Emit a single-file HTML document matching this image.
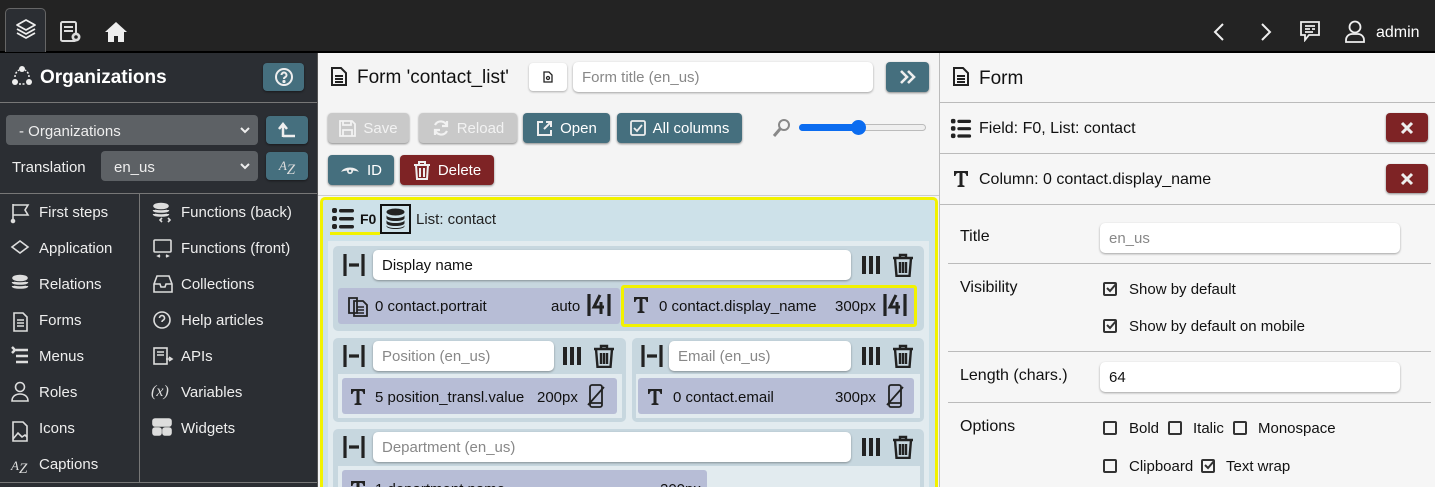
<!DOCTYPE html>
<html style="width:1435px;height:487px;overflow:hidden"><head><meta charset="utf-8">
<style>
*{box-sizing:border-box;margin:0;padding:0}
body{width:1435px;height:487px;overflow:hidden;font-family:"Liberation Sans",sans-serif;font-size:15px;background:#f4f4f4;position:relative;color:#111}
.a{position:absolute}
.t{position:absolute;white-space:nowrap;line-height:1;margin-top:1px}
.btn{position:absolute;border-radius:4px;box-shadow:0 1px 2px rgba(0,0,0,.45);color:#fff;font-size:15px;display:flex;align-items:center;justify-content:center;gap:7px}
.teal{background:#456f7e}
.red{background:#7e2325}
.dis{background:#c9c9c9;color:#f2f2f2}
.inp{position:absolute;background:#fff;border-radius:5px;box-shadow:0 1px 2px rgba(0,0,0,.35);font-size:15px;color:#888;padding-left:9px;display:flex;align-items:center}
.side{color:#eee;font-size:15px}
.grp{position:absolute;background:#c7d7df;border-radius:5px}
.chip{position:absolute;background:#b7bdd6;border-radius:3px;font-size:15px;color:#222;display:flex;align-items:center}
.hl{border:3px solid #f2f200}
.cb{position:absolute;width:14px;height:14px;border:2px solid #333;border-radius:2px}
.ln{position:absolute;height:1px;background:#bbb}
</style></head><body>

<div class="a" style="left:0;top:0;width:1435px;height:51px;background:#232323"></div>
<div class="a" style="left:0;top:51px;width:1435px;height:2px;background:#000"></div>
<div class="a" style="left:5px;top:8px;width:41px;height:44px;border:1px solid #666;border-bottom:none;border-radius:5px 5px 0 0;background:#2b2e33"></div>
<svg class="a" style="left:14px;top:17px" width="24" height="24" viewBox="0 0 24 24" fill="none" stroke="#eee" stroke-width="1.8" stroke-linejoin="round"><path d="M12 3 3 8l9 5 9-5z"/><path d="M3 12l9 5 9-5"/><path d="M3 16l9 5 9-5"/></svg>
<svg class="a" style="left:60px;top:21px" width="22" height="22" viewBox="0 0 22 22" fill="#ddd"><rect x="1" y="1" width="15" height="19" rx="1.5" fill="none" stroke="#ddd" stroke-width="2"/><rect x="4" y="5" width="9" height="2"/><rect x="4" y="9" width="9" height="2"/><circle cx="16" cy="16" r="4.5"/><circle cx="16" cy="16" r="1.8" fill="#232323"/></svg>
<svg class="a" style="left:104px;top:21px" width="24" height="22" viewBox="0 0 24 22" fill="#eee"><path d="M12 1 1 11h3v10h6v-6h4v6h6V11h3z"/></svg>
<svg class="a" style="left:1212px;top:22px" width="14" height="20" viewBox="0 0 14 20" fill="none" stroke="#eee" stroke-width="2"><path d="M11 2 3 10l8 8"/></svg>
<svg class="a" style="left:1259px;top:22px" width="14" height="20" viewBox="0 0 14 20" fill="none" stroke="#eee" stroke-width="2"><path d="M3 2l8 8-8 8"/></svg>
<svg class="a" style="left:1299px;top:20px" width="22" height="22" viewBox="0 0 22 22" fill="none" stroke="#eee" stroke-width="1.8"><path d="M2 2h18v13H10l-4 5v-5H2z"/><path d="M6 6h10M6 9h5M13 9h3M6 12h8"/></svg>
<svg class="a" style="left:1344px;top:20px" width="22" height="23" viewBox="0 0 22 23" fill="none" stroke="#eee" stroke-width="1.8"><circle cx="11" cy="7" r="5.5"/><path d="M2 22v-2a6 6 0 0 1 6-6h6a6 6 0 0 1 6 6v2z"/></svg>
<div class="t" style="left:1376px;top:24px;color:#fff;font-size:16px">admin</div>

<div class="a" style="left:0;top:53px;width:318px;height:434px;background:#2b2e33;border-right:1px solid #555"></div>
<svg class="a" style="left:11px;top:65px" width="22" height="22" viewBox="0 0 22 22" fill="#eee"><circle cx="11" cy="4" r="3"/><circle cx="4" cy="17" r="3"/><circle cx="18" cy="17" r="3"/><path d="M4 12a8 8 0 0 1 4-7M18 12a8 8 0 0 0-4-7M8 19h6" stroke="#eee" stroke-width="1.5" fill="none" stroke-dasharray="2 1.5"/></svg>
<div class="t" style="left:40px;top:67px;color:#fff;font-size:19px;font-weight:bold">Organizations</div>
<div class="btn teal" style="left:263px;top:63px;width:41px;height:28px"><svg width="20" height="20" viewBox="0 0 20 20" fill="none" stroke="#eee" stroke-width="2"><circle cx="10" cy="10" r="8"/><path d="M7.5 8a2.5 2.5 0 1 1 3.5 2.3c-.8.4-1 .9-1 1.7" /><circle cx="10" cy="14.5" r=".6" fill="#eee"/></svg></div>
<div class="a" style="left:0;top:102px;width:317px;height:1px;background:#777"></div>
<div class="a" style="left:6px;top:115px;width:252px;height:30px;background:#5d6165;border-radius:4px"></div>
<div class="t side" style="left:19px;top:123px">- Organizations</div>
<svg class="a" style="left:240px;top:126px" width="10" height="8" viewBox="0 0 10 8" fill="none" stroke="#eee" stroke-width="2"><path d="M1 2l4 4 4-4"/></svg>
<div class="btn teal" style="left:266px;top:116px;width:42px;height:28px"><svg width="18" height="16" viewBox="0 0 18 16" fill="none" stroke="#eee" stroke-width="2.5"><path d="M5 15V3M1 7l4-5 4 5M5 14h12"/></svg></div>
<div class="t side" style="left:12px;top:159px">Translation</div>
<div class="a" style="left:101px;top:151px;width:157px;height:30px;background:#5d6165;border-radius:4px"></div>
<div class="t side" style="left:114px;top:159px">en_us</div>
<svg class="a" style="left:240px;top:162px" width="10" height="8" viewBox="0 0 10 8" fill="none" stroke="#eee" stroke-width="2"><path d="M1 2l4 4 4-4"/></svg>
<div class="btn teal" style="left:266px;top:152px;width:42px;height:28px;font-family:'Liberation Serif',serif;font-style:italic;font-size:13px;color:#ddd;gap:0">A<span style="font-size:15px;position:relative;top:4px">Z</span></div>
<div class="a" style="left:0;top:193px;width:317px;height:1px;background:#777"></div>
<div class="a" style="left:139px;top:194px;width:1px;height:289px;background:#777"></div>
<div class="a" style="left:0;top:482px;width:317px;height:1px;background:#777"></div>

<div class="t side" style="left:39px;top:204px">First steps</div>
<div class="t side" style="left:39px;top:240px">Application</div>
<div class="t side" style="left:39px;top:276px">Relations</div>
<div class="t side" style="left:39px;top:312px">Forms</div>
<div class="t side" style="left:39px;top:348px">Menus</div>
<div class="t side" style="left:39px;top:384px">Roles</div>
<div class="t side" style="left:39px;top:420px">Icons</div>
<div class="t side" style="left:39px;top:456px">Captions</div>
<div class="t side" style="left:181px;top:204px">Functions (back)</div>
<div class="t side" style="left:181px;top:240px">Functions (front)</div>
<div class="t side" style="left:181px;top:276px">Collections</div>
<div class="t side" style="left:181px;top:312px">Help articles</div>
<div class="t side" style="left:181px;top:348px">APIs</div>
<div class="t side" style="left:181px;top:384px">Variables</div>
<div class="t side" style="left:181px;top:420px">Widgets</div>
<svg class="a" style="left:10px;top:202px" width="20" height="280" viewBox="0 0 20 280" fill="none" stroke="#ddd" stroke-width="1.6">
<path d="M3 2v18M3 3h15l-3 5 3 5H3"/><circle cx="3" cy="19" r="1.5" fill="#ddd"/>
<path d="M10 39l8 6-8 6-8-6z"/>
<ellipse cx="10" cy="76" rx="7" ry="2.5" fill="#ddd"/><path d="M3 80c0 2 14 2 14 0M3 84c0 2 14 2 14 0" stroke-width="2.5"/>
<path d="M4 111h9l4 4v14H4z"/><path d="M7 118h7M7 121h7M7 124h7"/>
<path d="M6 148h12M6 154h12M6 160h12M2 145l3 3-3 3" stroke-width="2.5"/>
<circle cx="10" cy="185" r="4.5"/><path d="M2 199c0-5 4-7 8-7s8 2 8 7z"/>
<path d="M3 220h10l4 4v15H3z"/><path d="M3 237l5-6 4 4 3-2 2 2"/>
</svg>
<div class="t" style="left:11px;top:458px;color:#ddd;font-family:'Liberation Serif',serif;font-style:italic;font-size:13px">A<span style="font-size:15px;position:relative;top:3px">Z</span></div>
<svg class="a" style="left:152px;top:202px" width="22" height="240" viewBox="0 0 22 240" fill="none" stroke="#ddd" stroke-width="1.6">
<ellipse cx="9" cy="4" rx="7" ry="2.5" fill="#ddd"/><path d="M2 8c0 2 14 2 14 0M2 12c0 2 14 2 14 0" stroke-width="2.5"/><path d="M10 16l-2 2 2 2M16 16l2 2-2 2"/>
<rect x="2" y="38" width="17" height="12" rx="1"/><path d="M8 53l-2 1 2 1M14 53l2 1-2 1"/>
<path d="M2 82l3-8h12l3 8v8H2zM2 82h6l1 3h4l1-3h6"/>
<circle cx="10" cy="118" r="8"/><path d="M7.5 116a2.5 2.5 0 1 1 3.5 2.3c-.8.4-1 .9-1 1.7"/>
<rect x="2" y="146" width="13" height="16"/><path d="M5 150h7M5 153h7M14 157h6M17 155l3 2-3 2"/>
<rect x="1" y="217" width="18" height="7" rx="2" fill="#ddd"/><rect x="1" y="226" width="8" height="7" rx="2" fill="#ddd"/><rect x="11" y="226" width="8" height="7" rx="2" fill="#ddd"/>
</svg>
<div class="t" style="left:151px;top:383px;color:#ddd;font-family:'Liberation Serif',serif;font-style:italic;font-size:16px">(<i>x</i>)</div>

<svg class="a" style="left:330px;top:66px" width="18" height="21" viewBox="0 0 18 21" fill="none" stroke="#222" stroke-width="2"><path d="M2 2h9l5 5v12H2z"/><path d="M5 10h8M5 13h8M5 16h8"/></svg>
<div class="t" style="left:357px;top:67px;font-size:19px;color:#111">Form 'contact_list'</div>
<div class="btn" style="left:529px;top:63px;width:38px;height:28px;background:#fff;box-shadow:0 1px 2px rgba(0,0,0,.3)"><svg width="10" height="12" viewBox="0 0 10 12" fill="none" stroke="#222" stroke-width="1.3"><path d="M1 1h5l3 3v7H1z"/><circle cx="5" cy="7" r="1.5"/></svg></div>
<div class="inp" style="left:573px;top:62px;width:300px;height:30px">Form title (en_us)</div>
<div class="btn teal" style="left:886px;top:62px;width:43px;height:30px"><svg width="20" height="16" viewBox="0 0 20 16" fill="none" stroke="#eee" stroke-width="2.6"><path d="M3 2l6 6-6 6M10 2l6 6-6 6"/></svg></div>

<div class="btn dis" style="left:328px;top:113px;width:81px;height:30px"><svg width="17" height="17" viewBox="0 0 17 17" fill="none" stroke="#f2f2f2" stroke-width="1.8"><path d="M1 1h12l3 3v12H1z"/><path d="M4 1v4h8V1M4 16v-6h9v6"/></svg>Save</div>
<div class="btn dis" style="left:419px;top:113px;width:98px;height:30px"><svg width="18" height="18" viewBox="0 0 18 18" fill="none" stroke="#f2f2f2" stroke-width="2.2"><path d="M15 7A6.5 6.5 0 0 0 3 6M3 11a6.5 6.5 0 0 0 12 1"/><path d="M15 2v5h-5M3 16v-5h5"/></svg>Reload</div>
<div class="btn teal" style="left:523px;top:113px;width:87px;height:30px"><svg width="17" height="17" viewBox="0 0 17 17" fill="none" stroke="#eee" stroke-width="2"><path d="M7 2H2v13h13v-5"/><path d="M8 9l7-7M10 2h5v5"/></svg>Open</div>
<div class="btn teal" style="left:617px;top:113px;width:125px;height:30px"><svg width="16" height="16" viewBox="0 0 16 16" fill="none" stroke="#eee" stroke-width="1.8"><rect x="1" y="1" width="14" height="14" rx="1.5"/><path d="M4 8l3 3 5-6"/></svg>All columns</div>
<svg class="a" style="left:772px;top:118px" width="20" height="20" viewBox="0 0 20 20" fill="none" stroke="#888" stroke-width="2"><circle cx="12" cy="7" r="5"/><path d="M8 11l-6 7" stroke-width="3"/></svg>
<div class="a" style="left:799px;top:124px;width:127px;height:7px;border-radius:4px;background:#efefef;border:1px solid #bbb"></div>
<div class="a" style="left:799px;top:124px;width:60px;height:7px;border-radius:4px;background:#0b6cf0"></div>
<div class="a" style="left:851px;top:120px;width:15px;height:15px;border-radius:50%;background:#0b6cf0"></div>

<div class="btn teal" style="left:328px;top:155px;width:66px;height:30px"><svg width="20" height="12" viewBox="0 0 20 12"><path d="M1 8C4 2 16 2 19 8c-3-2-15-2-18 0z" fill="#eee"/><circle cx="10" cy="7" r="3" fill="#eee"/><circle cx="10" cy="7" r="1.3" fill="#456f7e"/></svg>ID</div>
<div class="btn red" style="left:400px;top:155px;width:94px;height:30px"><svg width="18" height="19" viewBox="0 0 18 19" fill="none" stroke="#eee" stroke-width="2"><path d="M1 4h16M6 4V1h6v3M3 4l1 14h10l1-14M7 7v9M11 7v9"/></svg>Delete</div>
<div class="a" style="left:318px;top:195px;width:621px;height:1px;background:#ccc"></div>

<div class="a" style="left:320px;top:197px;width:618px;height:310px;background:#cde1e9;border:3px solid #f2f200;border-radius:5px"></div>
<svg class="a" style="left:331px;top:206px" width="24" height="24" viewBox="0 0 24 24" fill="#222"><rect x="1" y="2" width="5" height="5" rx="2"/><rect x="1" y="10" width="5" height="5" rx="2"/><rect x="1" y="18" width="5" height="5" rx="2"/><rect x="8" y="3" width="15" height="3.5" rx="1.7"/><rect x="8" y="11" width="15" height="3.5" rx="1.7"/><rect x="8" y="19" width="15" height="3.5" rx="1.7"/></svg>
<div class="a" style="left:330px;top:232px;width:50px;height:3px;background:#f2f200"></div>
<div class="t" style="left:360px;top:211px;font-size:14px;font-weight:bold">F0</div>
<div class="a" style="left:380px;top:204px;width:31px;height:30px;border:2px solid #111"></div>
<svg class="a" style="left:385px;top:208px" width="21" height="22" viewBox="0 0 21 22" fill="#222"><ellipse cx="10.5" cy="4" rx="9" ry="3.5"/><path d="M1.5 7c0 4 18 4 18 0v3c0 4-18 4-18 0zM1.5 12c0 4 18 4 18 0v3c0 4-18 4-18 0zM1.5 17c0 4 18 4 18 0v1c0 4-18 4-18 0z"/></svg>
<div class="t" style="left:416px;top:211px;font-size:15px;color:#222">List: contact</div>
<div class="a" style="left:328px;top:241px;width:601px;height:260px;background:#e2ebef"></div>

<svg width="0" height="0" style="position:absolute"><defs>
<symbol id="hw" viewBox="0 0 22 26"><path d="M2 2v22M20 2v22M6 13h10" stroke="#222" stroke-width="3.2" fill="none"/></symbol>
<symbol id="cols" viewBox="0 0 22 20"><path d="M3 1v18M10 1v18M17 1v18" stroke="#222" stroke-width="4"/></symbol>
<symbol id="trash" viewBox="0 0 22 24"><path d="M1 5h20M8 5V2h6v3M3 5l1.5 18h13L19 5M8 9v11M11 9v11M14 9v11" stroke="#222" stroke-width="2.4" fill="none"/></symbol>
<symbol id="T" viewBox="0 0 16 18"><path d="M1 1h14v5h-1.5c-.5-2-1-3-3-3H9.5v12l2 .8V17h-7v-1.2l2-.8V3H5.5c-2 0-2.5 1-3 3H1z" fill="#222"/></symbol>
<symbol id="wrap" viewBox="0 0 24 26"><path d="M2 2v22M22 2v22" stroke="#222" stroke-width="3.2"/><path d="M13 3L7 15h10M14 10v12" stroke="#222" stroke-width="3" fill="none"/></symbol>
<symbol id="mob" viewBox="0 0 18 24"><rect x="3" y="1" width="12" height="22" rx="2" stroke="#222" stroke-width="1.8" fill="none"/><path d="M3 19h12M1 21L17 3" stroke="#222" stroke-width="1.8"/></symbol>
<symbol id="copy" viewBox="0 0 22 22"><path d="M2 3h8v15H2zM7 6h9l4 4v11H7z" stroke="#222" stroke-width="1.8" fill="#b7bdd6"/><path d="M10 12h7M10 15h7M10 18h7" stroke="#222" stroke-width="1.5"/></symbol>
</defs></svg>

<div class="grp" style="left:333px;top:246px;width:591px;height:85px"></div>
<svg class="a" style="left:342px;top:252px" width="24" height="26"><use href="#hw"/></svg>
<div class="inp" style="left:373px;top:250px;width:478px;height:30px;color:#111">Display name</div>
<svg class="a" style="left:861px;top:255px" width="22" height="20"><use href="#cols"/></svg>
<svg class="a" style="left:892px;top:253px" width="22" height="24"><use href="#trash"/></svg>
<div class="chip" style="left:338px;top:288px;width:282px;height:36px"></div>
<svg class="a" style="left:347px;top:295px" width="22" height="22"><use href="#copy"/></svg>
<div class="t" style="left:375px;top:298px">0 contact.portrait</div>
<div class="t" style="left:551px;top:298px">auto</div>
<svg class="a" style="left:587px;top:292px" width="24" height="26"><use href="#wrap"/></svg>
<div class="chip hl" style="left:621px;top:285px;width:296px;height:42px"></div>
<svg class="a" style="left:633px;top:296px" width="16" height="18"><use href="#T"/></svg>
<div class="t" style="left:659px;top:298px">0 contact.display_name</div>
<div class="t" style="left:835px;top:298px">300px</div>
<svg class="a" style="left:883px;top:292px" width="24" height="26"><use href="#wrap"/></svg>

<div class="grp" style="left:333px;top:338px;width:293px;height:84px"></div>
<svg class="a" style="left:342px;top:343px" width="24" height="26"><use href="#hw"/></svg>
<div class="inp" style="left:373px;top:341px;width:181px;height:30px">Position (en_us)</div>
<svg class="a" style="left:562px;top:346px" width="22" height="20"><use href="#cols"/></svg>
<svg class="a" style="left:593px;top:344px" width="22" height="24"><use href="#trash"/></svg>
<div class="a" style="left:338px;top:374px;width:284px;height:44px;background:#e2ebef"></div>
<div class="chip" style="left:342px;top:378px;width:275px;height:36px"></div>
<svg class="a" style="left:350px;top:388px" width="16" height="18"><use href="#T"/></svg>
<div class="t" style="left:375px;top:389px">5 position_transl.value</div>
<div class="t" style="left:537px;top:389px">200px</div>
<svg class="a" style="left:587px;top:384px" width="18" height="24"><use href="#mob"/></svg>

<div class="grp" style="left:632px;top:338px;width:292px;height:84px"></div>
<svg class="a" style="left:640px;top:343px" width="24" height="26"><use href="#hw"/></svg>
<div class="inp" style="left:669px;top:341px;width:182px;height:30px">Email (en_us)</div>
<svg class="a" style="left:861px;top:346px" width="22" height="20"><use href="#cols"/></svg>
<svg class="a" style="left:892px;top:344px" width="22" height="24"><use href="#trash"/></svg>
<div class="a" style="left:636px;top:374px;width:284px;height:44px;background:#e2ebef"></div>
<div class="chip" style="left:638px;top:378px;width:276px;height:36px"></div>
<svg class="a" style="left:647px;top:388px" width="16" height="18"><use href="#T"/></svg>
<div class="t" style="left:673px;top:389px">0 contact.email</div>
<div class="t" style="left:835px;top:389px">300px</div>
<svg class="a" style="left:886px;top:384px" width="18" height="24"><use href="#mob"/></svg>

<div class="grp" style="left:333px;top:429px;width:591px;height:70px"></div>
<svg class="a" style="left:342px;top:434px" width="24" height="26"><use href="#hw"/></svg>
<div class="inp" style="left:373px;top:432px;width:478px;height:30px">Department (en_us)</div>
<svg class="a" style="left:861px;top:437px" width="22" height="20"><use href="#cols"/></svg>
<svg class="a" style="left:892px;top:435px" width="22" height="24"><use href="#trash"/></svg>
<div class="a" style="left:338px;top:466px;width:582px;height:30px;background:#e2ebef"></div>
<div class="chip" style="left:342px;top:470px;width:365px;height:30px"></div>
<svg class="a" style="left:350px;top:480px" width="16" height="18"><use href="#T"/></svg>
<div class="t" style="left:375px;top:481px">1 department.name</div>
<div class="t" style="left:660px;top:481px">200px</div>

<div class="a" style="left:939px;top:53px;width:496px;height:434px;background:#f6f6f6;border-left:1px solid #bbb"></div>
<svg class="a" style="left:952px;top:66px" width="18" height="21" viewBox="0 0 18 21" fill="none" stroke="#222" stroke-width="2"><path d="M2 2h9l5 5v12H2z"/><path d="M5 10h8M5 13h8M5 16h8"/></svg>
<div class="t" style="left:979px;top:68px;font-size:19px">Form</div>
<div class="ln" style="left:940px;top:102px;width:495px"></div>
<svg class="a" style="left:950px;top:117px" width="22" height="22" viewBox="0 0 24 24" fill="#222"><rect x="1" y="2" width="5" height="5" rx="2"/><rect x="1" y="10" width="5" height="5" rx="2"/><rect x="1" y="18" width="5" height="5" rx="2"/><rect x="8" y="3" width="15" height="3.5" rx="1.7"/><rect x="8" y="11" width="15" height="3.5" rx="1.7"/><rect x="8" y="19" width="15" height="3.5" rx="1.7"/></svg>
<div class="t" style="left:979px;top:120px;font-size:16px">Field: F0, List: contact</div>
<div class="btn red" style="left:1386px;top:113px;width:42px;height:29px"><svg width="14" height="14" viewBox="0 0 14 14" stroke="#eee" stroke-width="3"><path d="M2 2l10 10M12 2L2 12"/></svg></div>
<div class="ln" style="left:940px;top:153px;width:495px"></div>
<svg class="a" style="left:953px;top:170px" width="16" height="18"><use href="#T"/></svg>
<div class="t" style="left:979px;top:171px;font-size:16px">Column: 0 contact.display_name</div>
<div class="btn red" style="left:1386px;top:164px;width:42px;height:29px"><svg width="14" height="14" viewBox="0 0 14 14" stroke="#eee" stroke-width="3"><path d="M2 2l10 10M12 2L2 12"/></svg></div>
<div class="ln" style="left:940px;top:204px;width:495px"></div>

<div class="t" style="left:960px;top:228px;font-size:16px">Title</div>
<div class="inp" style="left:1100px;top:223px;width:300px;height:30px">en_us</div>
<div class="ln" style="left:948px;top:263px;width:483px"></div>
<div class="t" style="left:960px;top:279px;font-size:16px">Visibility</div>
<div class="cb" style="left:1103px;top:282px"></div><svg class="a" style="left:1105px;top:282px" width="12" height="12" viewBox="0 0 12 12" fill="none" stroke="#333" stroke-width="2"><path d="M2 6l3 3 6-7"/></svg>
<div class="t" style="left:1129px;top:281px">Show by default</div>
<div class="cb" style="left:1103px;top:319px"></div><svg class="a" style="left:1105px;top:319px" width="12" height="12" viewBox="0 0 12 12" fill="none" stroke="#333" stroke-width="2"><path d="M2 6l3 3 6-7"/></svg>
<div class="t" style="left:1129px;top:318px">Show by default on mobile</div>
<div class="ln" style="left:948px;top:351px;width:483px"></div>
<div class="t" style="left:960px;top:367px;font-size:16px">Length (chars.)</div>
<div class="inp" style="left:1100px;top:362px;width:300px;height:30px;color:#111">64</div>
<div class="ln" style="left:948px;top:402px;width:483px"></div>
<div class="t" style="left:960px;top:418px;font-size:16px">Options</div>
<div class="cb" style="left:1103px;top:421px"></div><div class="t" style="left:1129px;top:420px">Bold</div>
<div class="cb" style="left:1168px;top:421px"></div><div class="t" style="left:1193px;top:420px">Italic</div>
<div class="cb" style="left:1233px;top:421px"></div><div class="t" style="left:1258px;top:420px">Monospace</div>
<div class="cb" style="left:1103px;top:459px"></div><div class="t" style="left:1129px;top:458px">Clipboard</div>
<div class="cb" style="left:1201px;top:459px"></div><svg class="a" style="left:1203px;top:459px" width="12" height="12" viewBox="0 0 12 12" fill="none" stroke="#333" stroke-width="2"><path d="M2 6l3 3 6-7"/></svg>
<div class="t" style="left:1226px;top:458px">Text wrap</div>
</body></html>
